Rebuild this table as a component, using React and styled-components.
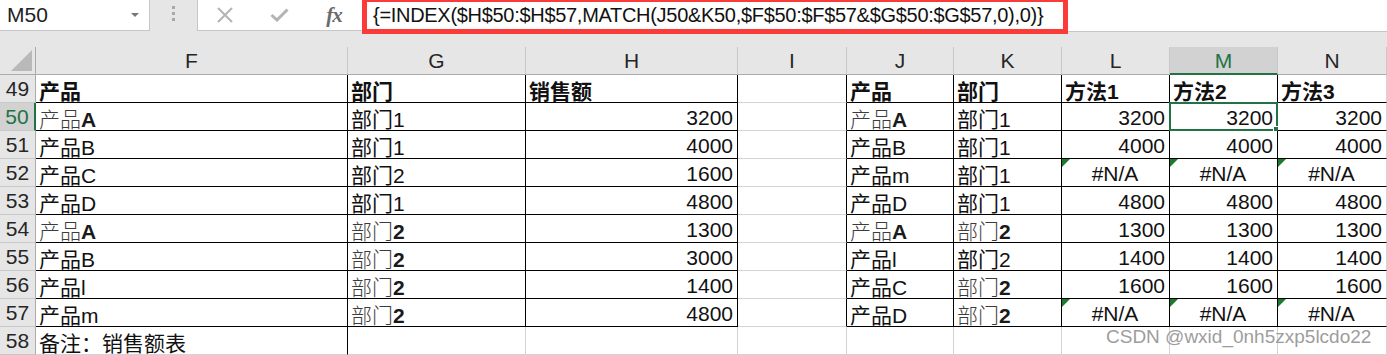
import React from 'react'
import styled, { createGlobalStyle } from 'styled-components'

const GlobalStyle = createGlobalStyle`
  html, body {
    margin: 0;
    padding: 0;
    background: #e6e6e6;
  }
  body {
    font-family: "Liberation Sans", "Noto Sans CJK SC", sans-serif;
    overflow: hidden;
  }
`

const GREEN = '#217346'
const GRID = '#d4d4d4'
const INK = '#000'

const Sheet = styled.div`
  position: relative;
  width: 1387px;
  height: 355px;
  overflow: hidden;
  background: #e6e6e6;
  color: #111;
`

const FormulaRow = styled.div`
  display: flex;
  height: 32px;
  margin-bottom: 15px;
`

const NameBox = styled.div`
  width: 150px;
  height: 31px;
  box-sizing: border-box;
  display: flex;
  align-items: center;
  justify-content: space-between;
  padding: 0 10px 0 7px;
  background: #fff;
  border-right: 1px solid #c6c6c6;
  border-bottom: 1px solid #c6c6c6;
  font-size: 21px;
  color: #222;
`

const Caret = styled.span`
  width: 0;
  height: 0;
  border-left: 4px solid transparent;
  border-right: 4px solid transparent;
  border-top: 4px solid #777;
`

const Grip = styled.div`
  width: 47px;
  display: flex;
  flex-direction: column;
  align-items: center;
  justify-content: flex-start;
  gap: 3px;
  padding-top: 6px;
  box-sizing: border-box;
`

const Dot = styled.span`
  width: 3px;
  height: 3px;
  background: #a8a8a8;
`

const ButtonPanel = styled.div`
  width: 165px;
  height: 31px;
  box-sizing: border-box;
  display: flex;
  background: #fff;
  border-left: 1px solid #c6c6c6;
  border-bottom: 1px solid #c6c6c6;
`

const IconSlot = styled.div`
  width: 54px;
  display: flex;
  align-items: center;
  justify-content: center;
`

const Fx = styled.span`
  font-family: "Liberation Serif", serif;
  font-style: italic;
  font-weight: 700;
  font-size: 21px;
  color: #6b6b6b;
  letter-spacing: -1px;
  margin-left: 2px;
`

const FormulaInput = styled.div`
  position: relative;
  flex: 1;
  height: 32px;
  box-sizing: border-box;
  display: flex;
  align-items: center;
  padding-left: 11px;
  background: #fff;
  border-bottom: 1px solid #c6c6c6;
  font-size: 20px;
  letter-spacing: -0.3px;
  color: #111;
  white-space: nowrap;
`

const Highlight = styled.div`
  position: absolute;
  left: 0;
  top: -3px;
  width: 706px;
  height: 37px;
  box-sizing: border-box;
  border: 5px solid #fb3a3a;
  pointer-events: none;
`

const Grid = styled.div`
  display: grid;
  grid-template-columns: 36px 312px 178px 212px 109px 107px 108px 108px 108px 1fr;
  grid-auto-rows: 28px;
  font-size: 21px;
`

const Corner = styled.div`
  position: relative;
  box-sizing: border-box;
  background: #e6e6e6;
  border-right: 1px solid #ababab;
  border-bottom: 1px solid #ababab;

  &::after {
    content: '';
    position: absolute;
    right: 3px;
    bottom: 3px;
    width: 0;
    height: 0;
    border-left: 21px solid transparent;
    border-bottom: 21px solid #b9b9b9;
  }
`

const ColHead = styled.div`
  box-sizing: border-box;
  display: flex;
  align-items: center;
  justify-content: center;
  padding-top: 1px;
  background: ${p => (p.$active ? '#d2d2d2' : '#e6e6e6')};
  color: ${p => (p.$active ? GREEN : '#262626')};
  border-right: 1px solid #c8c8c8;
  border-bottom: ${p => (p.$active ? `2px solid ${GREEN}` : '1px solid #ababab')};
`

const RowHead = styled.div`
  box-sizing: border-box;
  display: flex;
  align-items: center;
  justify-content: center;
  padding-top: 1px;
  background: ${p => (p.$active ? '#d2d2d2' : '#e6e6e6')};
  color: ${p => (p.$active ? GREEN : '#262626')};
  border-right: ${p => (p.$active ? `2px solid ${GREEN}` : '1px solid #ababab')};
  border-bottom: 1px solid #c8c8c8;
`

const Cell = styled.div`
  position: relative;
  box-sizing: border-box;
  display: flex;
  align-items: center;
  justify-content: ${p => p.$align};
  padding: 2px 4px 0 3px;
  background: #fff;
  border-right: 1px solid ${p => p.$right};
  border-bottom: 1px solid ${p => p.$bottom};
  font-weight: ${p => (p.$bold ? 700 : 400)};
  white-space: nowrap;
`

const Thin = styled.span`
  font-weight: 300;
  color: #3c3c3c;
`

const Tail = styled.span`
  font-weight: 700;
  color: #1a1a1a;
`

const ErrorFlag = styled.span`
  position: absolute;
  top: 0;
  left: 0;
  width: 0;
  height: 0;
  border-top: 8px solid #1b7a2e;
  border-right: 8px solid transparent;
`

const Selection = styled.span`
  position: absolute;
  top: -1px;
  left: -1px;
  right: -1px;
  bottom: -1px;
  border: 2px solid ${GREEN};
  pointer-events: none;

  &::after {
    content: '';
    position: absolute;
    right: -5px;
    bottom: -5px;
    width: 6px;
    height: 6px;
    background: ${GREEN};
    border: 1px solid #fff;
  }
`

const Watermark = styled.div`
  position: absolute;
  left: 1106px;
  top: 326px;
  font-size: 19px;
  color: #9d9d9d;
  white-space: nowrap;
`

const COLS = ['F', 'G', 'H', 'I', 'J', 'K', 'L', 'M', 'N']
const NUMERIC = ['H', 'L', 'M', 'N']

const T = (thin, tail) => ({ thin, tail })

const ROWS = [
  { n: 49, bold: true, cells: ['产品', '部门', '销售额', '', '产品', '部门', '方法1', '方法2', '方法3'] },
  { n: 50, cells: [T('产品', 'A'), '部门1', '3200', '', T('产品', 'A'), '部门1', '3200', '3200', '3200'] },
  { n: 51, cells: ['产品B', '部门1', '4000', '', '产品B', '部门1', '4000', '4000', '4000'] },
  { n: 52, cells: ['产品C', '部门2', '1600', '', '产品m', '部门1', '#N/A', '#N/A', '#N/A'] },
  { n: 53, cells: ['产品D', '部门1', '4800', '', '产品D', '部门1', '4800', '4800', '4800'] },
  { n: 54, cells: [T('产品', 'A'), T('部门', '2'), '1300', '', T('产品', 'A'), T('部门', '2'), '1300', '1300', '1300'] },
  { n: 55, cells: ['产品B', T('部门', '2'), '3000', '', '产品l', '部门2', '1400', '1400', '1400'] },
  { n: 56, cells: ['产品l', T('部门', '2'), '1400', '', '产品C', T('部门', '2'), '1600', '1600', '1600'] },
  { n: 57, cells: ['产品m', T('部门', '2'), '4800', '', '产品D', T('部门', '2'), '#N/A', '#N/A', '#N/A'] },
  { n: 58, cells: ['备注：销售额表', '', '', '', '', '', '', '', ''] },
]

const FORMULA = '{=INDEX($H$50:$H$57,MATCH(J50&K50,$F$50:$F$57&$G$50:$G$57,0),0)}'

// table borders: F49:H57 and J49:N57 are framed in black
function borders(col, n) {
  const inTable = n >= 49 && n <= 57
  const right = (inTable && col !== 'N') || (col === 'F' && n === 58) ? INK : GRID
  const bottom = inTable && col !== 'I' ? INK : GRID
  return { right, bottom }
}

function CellValue({ value }) {
  if (value && typeof value === 'object') {
    return (
      <span>
        <Thin>{value.thin}</Thin>
        <Tail>{value.tail}</Tail>
      </span>
    )
  }
  return value
}

function SheetRow({ row }) {
  return (
    <>
      <RowHead $active={row.n === 50}>{row.n}</RowHead>
      {row.cells.map((value, i) => {
        const col = COLS[i]
        const { right, bottom } = borders(col, row.n)
        const isError = value === '#N/A'
        let align = 'flex-start'
        if (isError) align = 'center'
        else if (!row.bold && NUMERIC.includes(col)) align = 'flex-end'
        return (
          <Cell key={col} $right={right} $bottom={bottom} $align={align} $bold={row.bold}>
            {isError && <ErrorFlag />}
            <CellValue value={value} />
            {col === 'M' && row.n === 50 && <Selection />}
          </Cell>
        )
      })}
    </>
  )
}

export default function App() {
  return (
    <Sheet>
      <GlobalStyle />
      <FormulaRow>
        <NameBox>
          M50
          <Caret />
        </NameBox>
        <Grip>
          <Dot />
          <Dot />
          <Dot />
        </Grip>
        <ButtonPanel>
          <IconSlot>
            <svg width="18" height="16" viewBox="0 0 18 16">
              <path d="M2 1 L16 15 M16 1 L2 15" stroke="#b3b3b3" strokeWidth="2" fill="none" />
            </svg>
          </IconSlot>
          <IconSlot>
            <svg width="19" height="14" viewBox="0 0 19 14">
              <path d="M1.5 7 L7 12 L17.5 1.5" stroke="#b3b3b3" strokeWidth="3" fill="none" />
            </svg>
          </IconSlot>
          <IconSlot>
            <Fx>fx</Fx>
          </IconSlot>
        </ButtonPanel>
        <FormulaInput>
          {FORMULA}
          <Highlight />
        </FormulaInput>
      </FormulaRow>

      <Grid>
        <Corner />
        {COLS.map(c => (
          <ColHead key={c} $active={c === 'M'}>{c}</ColHead>
        ))}
        {ROWS.map(row => (
          <SheetRow key={row.n} row={row} />
        ))}
      </Grid>

      <Watermark>CSDN @wxid_0nh5zxp5lcdo22</Watermark>
    </Sheet>
  )
}
